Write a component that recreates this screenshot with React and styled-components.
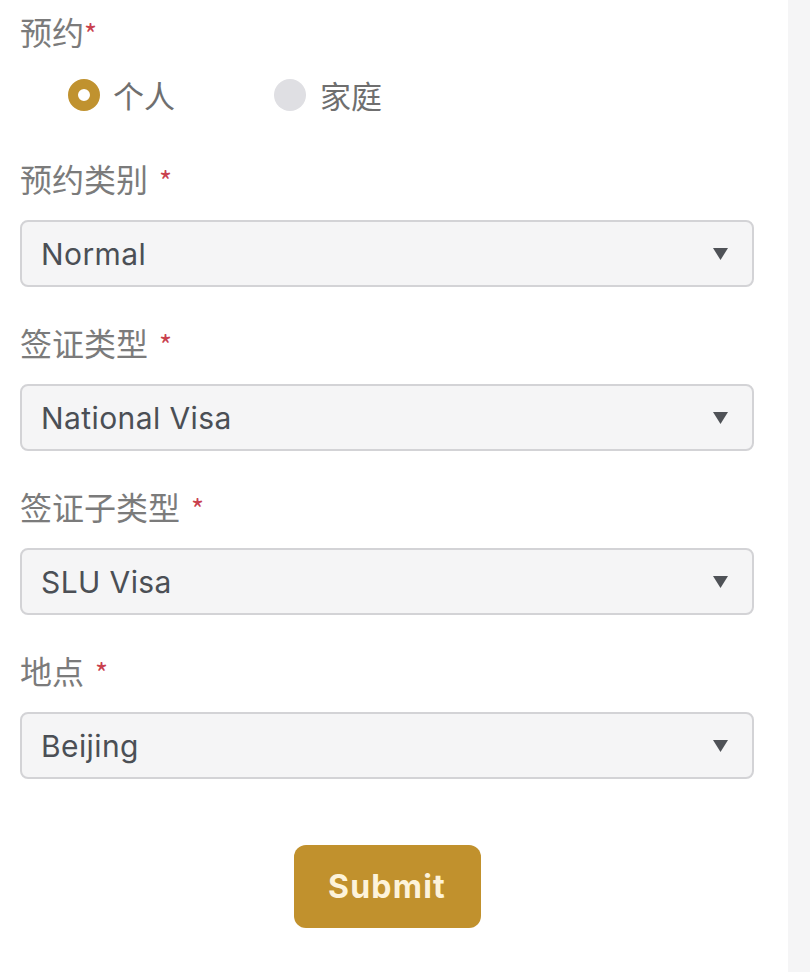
import React from "react";
import styled, { createGlobalStyle } from "styled-components";

const Global = createGlobalStyle`
  html, body { margin: 0; padding: 0; background: #ffffff; }
  body { font-family: "Inter", "Noto Sans CJK SC", sans-serif; }
`;

const Page = styled.div`
  display: flex;
  min-height: 972px;
  width: 810px;
`;

const Main = styled.form`
  flex: 1;
  display: flex;
  flex-direction: column;
  padding: 16px 34px 0 20px;
`;

const Sidebar = styled.div`
  width: 22px;
  background: #f5f5f6;
`;

const Label = styled.div`
  font-family: "Noto Sans CJK SC", sans-serif;
  font-size: 32px;
  line-height: 30px;
  height: 34px;
  color: #7b7b7b;
  margin-top: ${(p) => p.$mt || 0}px;
`;

const Star = styled.span`
  color: #c9414e;
  font-size: 28px;
  margin-left: ${(p) => (p.$tight ? 0 : 11)}px;
`;

const RadioRow = styled.div`
  display: flex;
  align-items: center;
  height: 34px;
  margin-top: 28px;
  padding-left: 48px;
  gap: 99px;
`;

const RadioItem = styled.label`
  display: flex;
  align-items: center;
  gap: ${(p) => (p.$checked ? 13 : 14)}px;
  font-family: "Noto Sans CJK SC", sans-serif;
  font-size: 31px;
  line-height: 34px;
  color: #6f6f6f;
`;

const Dot = styled.span`
  box-sizing: border-box;
  width: 32px;
  height: 32px;
  border-radius: 50%;
  background: ${(p) => (p.$checked ? "#ffffff" : "#dfdfe3")};
  border: ${(p) => (p.$checked ? "10px solid #c0922f" : "none")};
`;

const Select = styled.div`
  box-sizing: border-box;
  margin-top: 23px;
  height: 67px;
  border: 2px solid #d3d3d6;
  border-radius: 8px;
  background: #f5f5f6;
  display: flex;
  align-items: center;
  justify-content: space-between;
  padding: 0 24px 0 19px;
  font-family: "Inter", sans-serif;
  font-size: 30px;
  letter-spacing: 0.4px;
  color: #4b4f55;
`;

const Caret = styled.svg`
  width: 15px;
  height: 12px;
  display: block;
`;

const ButtonRow = styled.div`
  display: flex;
  justify-content: center;
  margin-top: 66px;
`;

const Button = styled.button`
  width: 187px;
  height: 83px;
  border: none;
  border-radius: 12px;
  background: #c1912d;
  color: #fdf3da;
  font-family: "Inter", sans-serif;
  font-weight: 700;
  font-size: 32px;
  letter-spacing: 1.2px;
`;

const fields = [
  { label: "预约类别", value: "Normal", mt: 51 },
  { label: "签证类型", value: "National Visa", mt: 40 },
  { label: "签证子类型", value: "SLU Visa", mt: 40 },
  { label: "地点", value: "Beijing", mt: 40 },
];

export default function App() {
  return (
    <Page>
      <Global />
      <Main onSubmit={(e) => e.preventDefault()}>
        <Label>
          预约<Star $tight>*</Star>
        </Label>
        <RadioRow>
          <RadioItem $checked>
            <Dot $checked />
            个人
          </RadioItem>
          <RadioItem>
            <Dot />
            家庭
          </RadioItem>
        </RadioRow>
        {fields.map((f) => (
          <React.Fragment key={f.label}>
            <Label $mt={f.mt}>
              {f.label}
              <Star>*</Star>
            </Label>
            <Select>
              <span>{f.value}</span>
              <Caret viewBox="0 0 15 12">
                <path d="M0 0 H15 L7.5 12 Z" fill="#4f5257" />
              </Caret>
            </Select>
          </React.Fragment>
        ))}
        <ButtonRow>
          <Button type="submit">Submit</Button>
        </ButtonRow>
      </Main>
      <Sidebar />
    </Page>
  );
}
